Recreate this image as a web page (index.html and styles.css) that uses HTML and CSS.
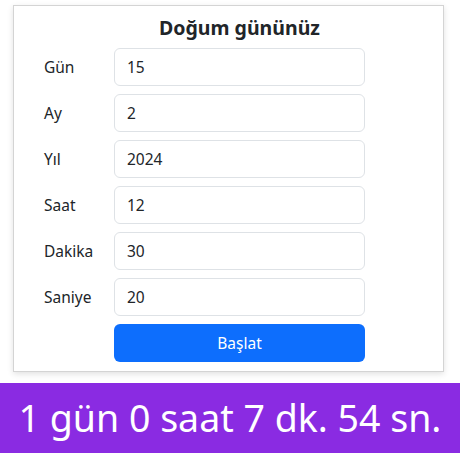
FILE: index.html
```html
<!DOCTYPE html>
<html lang="tr">
<head>
    <meta charset="UTF-8">
    <meta name="viewport" content="width=device-width, initial-scale=1.0">
    <title>Doğum gününüz</title>
    <link rel="stylesheet" href="styles.css">
</head>
<body>
    <div class="card">
        <form class="birth-form">
            <span></span>
            <h1 class="title">Doğum gününüz</h1>

            <label for="gun">Gün</label>
            <input class="field" id="gun" type="text" value="15">

            <label for="ay">Ay</label>
            <input class="field" id="ay" type="text" value="2">

            <label for="yil">Yıl</label>
            <input class="field" id="yil" type="text" value="2024">

            <label for="saat">Saat</label>
            <input class="field" id="saat" type="text" value="12">

            <label for="dakika">Dakika</label>
            <input class="field" id="dakika" type="text" value="30">

            <label for="saniye">Saniye</label>
            <input class="field" id="saniye" type="text" value="20">

            <span></span>
            <button class="start-btn" type="button">Başlat</button>
        </form>
    </div>

    <div class="countdown">1 gün 0 saat 7 dk. 54 sn.</div>
</body>
</html>
```

FILE: styles.css
```css
body {
    margin: 0;
    font-family: "Noto Sans", "Open Sans", sans-serif;
    color: #212529;
    background-color: #fff;
}

.card {
    margin: 5px 16px 0 13px;
    padding: 10px 0 9px 30px;
    border: 1px solid #d4d4d4;
    box-shadow: 0 2px 6px rgba(0,0,0,0.12);
    background-color: white;
}

.birth-form {
    display: grid;
    grid-template-columns: 70px 251px;
    row-gap: 8px;
    align-items: center;
}

.title {
    margin: 0;
    font-size: 19.5px;
    line-height: 24px;
    font-weight: bold;
    text-align: center;
}

.birth-form label {
    font-size: 15.5px;
}

.field {
    height: 38px;
    box-sizing: border-box;
    padding: 0 12px;
    border: 1px solid #dee2e6;
    border-radius: 6px;
    font-family: inherit;
    font-size: 15.5px;
    color: #212529;
}

.start-btn {
    height: 38px;
    border: none;
    border-radius: 6px;
    background-color: #0d6efd;
    color: white;
    font-family: inherit;
    font-size: 15.5px;
}

.countdown {
    margin-top: 11px;
    height: 70px;
    line-height: 70px;
    background-color: #8a2be2;
    color: white;
    font-size: 37.5px;
    text-align: center;
}
```
